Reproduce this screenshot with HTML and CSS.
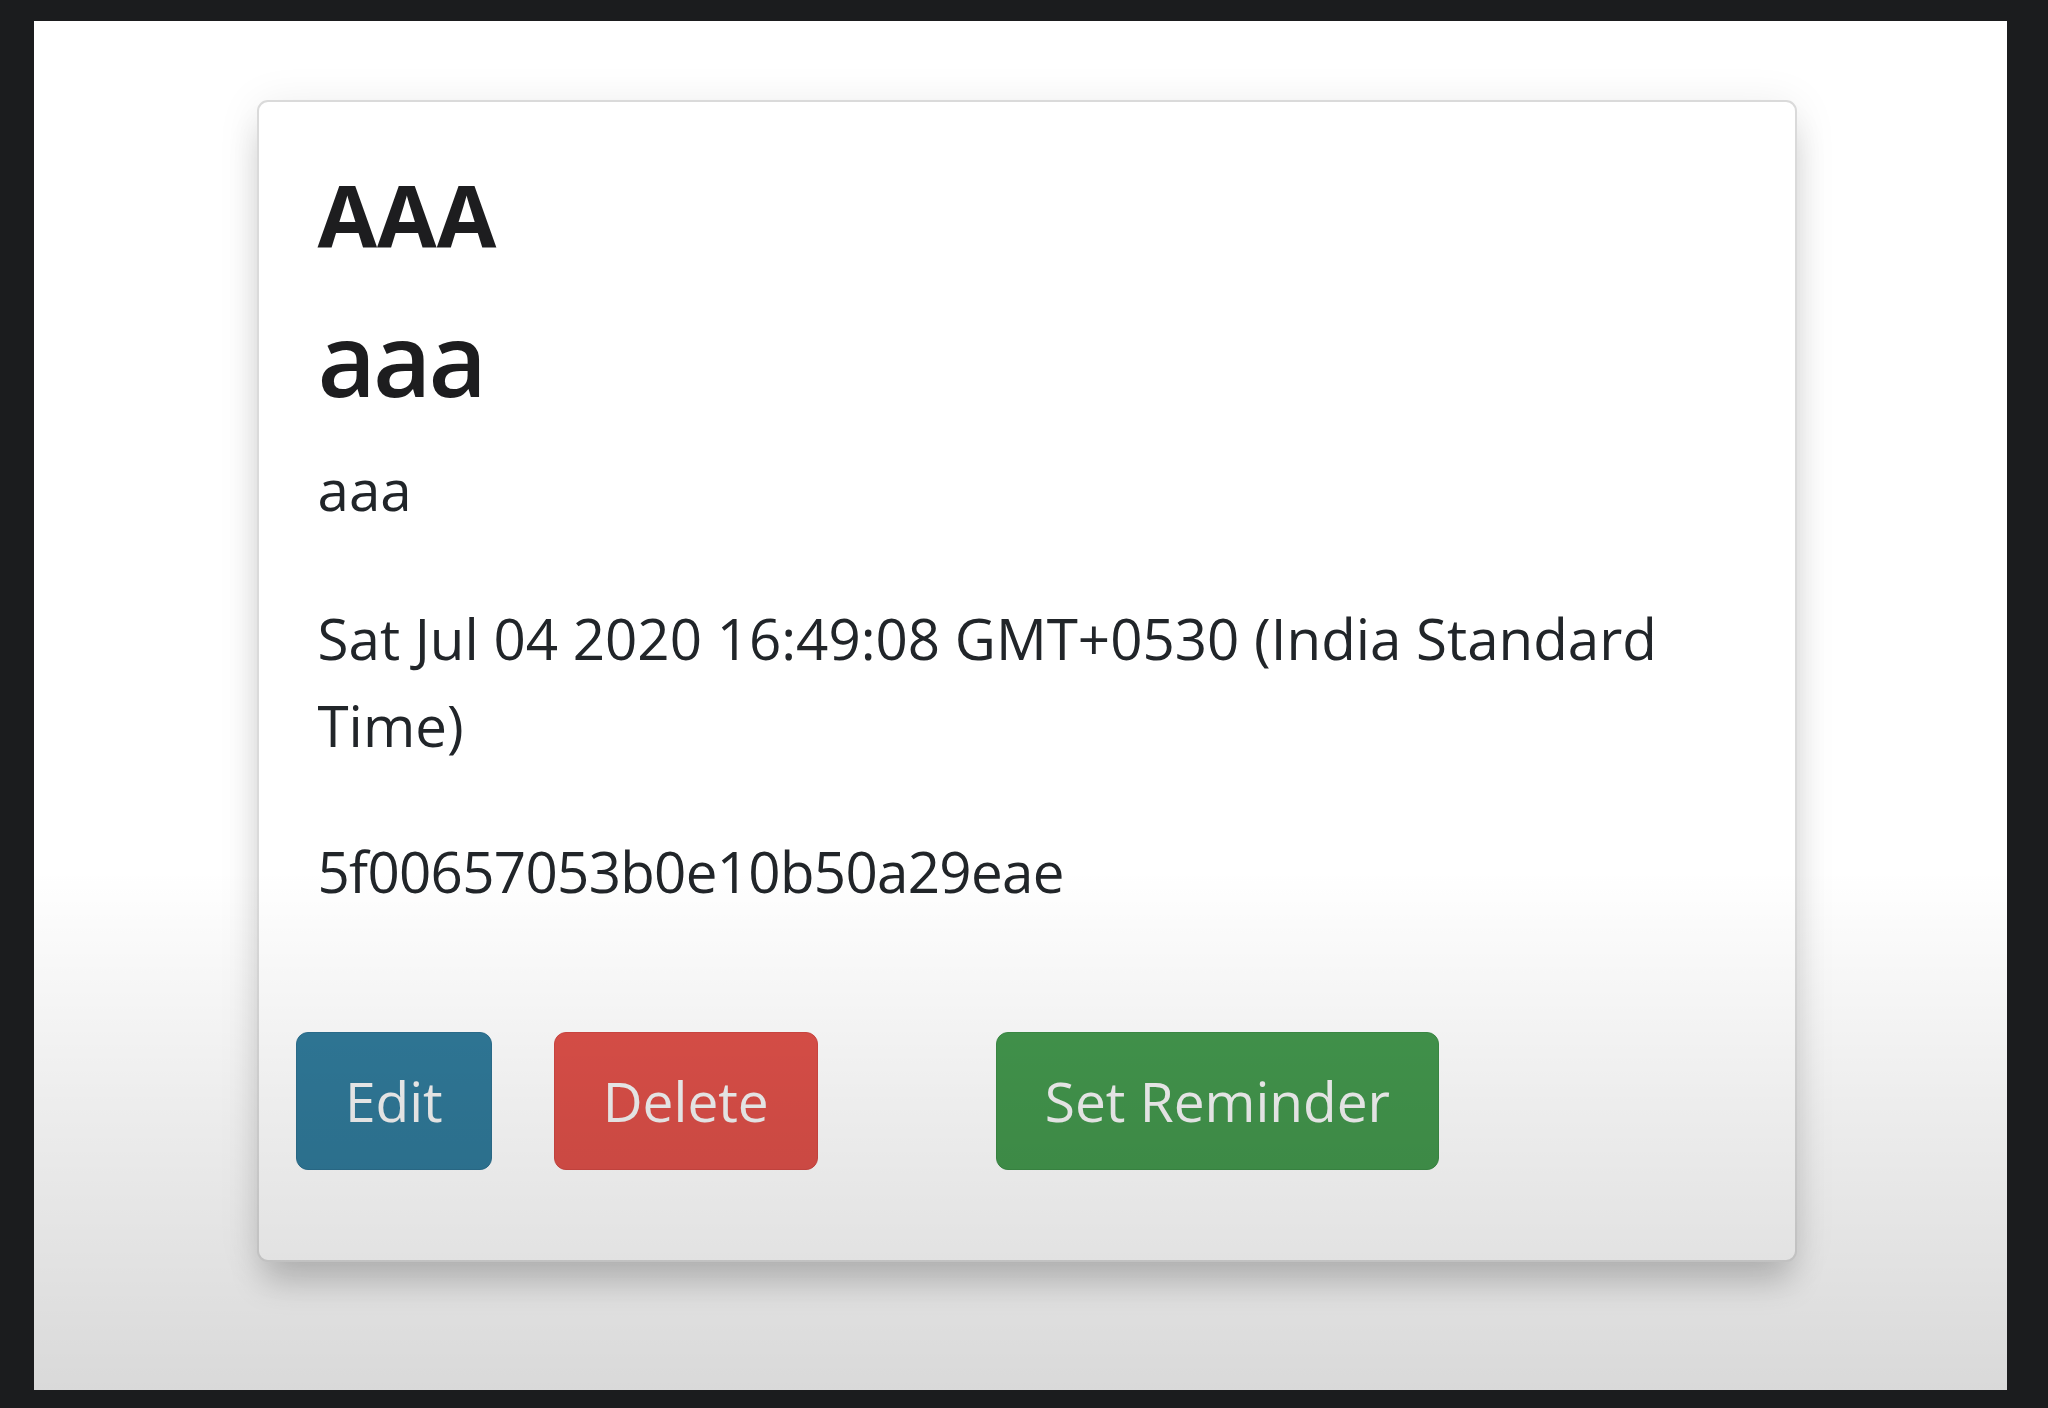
FILE: index.html
```html
<!DOCTYPE html>
<html lang="en">
<head>
<meta charset="utf-8">
<title>Note card</title>
<link rel="stylesheet" href="styles.css">
</head>
<body>
<div class="frame">
  <div class="card">
    <div class="card-body">
      <h4 class="card-title">AAA</h4>
      <h3 class="card-subtitle">aaa</h3>
      <p class="text small-gap">aaa</p>
      <p class="text date">Sat Jul 04 2020 16:49:08 GMT+0530 (India Standard Time)</p>
      <p class="text hash">5f00657053b0e10b50a29eae</p>
    </div>
    <div class="card-actions">
      <button class="btn btn-edit">Edit</button>
      <button class="btn btn-delete">Delete</button>
      <button class="btn btn-remind">Set Reminder</button>
    </div>
  </div>
</div>
</body>
</html>
```

FILE: styles.css
```css
html, body {
  margin: 0;
  padding: 0;
}
body {
  background: #1b1c1e;
  width: 2048px;
  height: 1408px;
  overflow: hidden;
  font-family: "Open Sans", "Noto Sans", sans-serif;
  color: #212529;
}
.frame {
  position: relative;
  margin: 21px 41px 18px 34px;
  height: 1369px;
  background: #ffffff;
  padding-top: 79px;
  box-sizing: border-box;
  overflow: hidden;
}
.frame::after {
  content: "";
  position: absolute;
  inset: 0;
  pointer-events: none;
  background: linear-gradient(to bottom, rgba(0,0,0,0) 0%, rgba(0,0,0,0) 62%, rgba(0,0,0,0.075) 80%, rgba(0,0,0,0.15) 100%);
}
.card {
  margin-left: 223px;
  width: 1540px;
  box-sizing: border-box;
  background: #fff;
  border: 2px solid #dadada;
  border-radius: 11px;
  box-shadow: 0 26px 34px -6px rgba(0,0,0,0.19), 0 4px 44px rgba(0,0,0,0.08);
}
.card-body {
  padding: 60.6px 62px 0 58.5px;
}
.card-title {
  margin: 0 0 32px 0;
  font-size: 86.4px;
  line-height: 103.7px;
  font-weight: 700;
  color: #1d1d1f;
}
.card-subtitle {
  margin: 0 0 28.2px 0;
  font-size: 100.8px;
  line-height: 121px;
  font-weight: 550;
  letter-spacing: -3px;
  color: #1d1d1f;
}
.text {
  margin: 0;
  font-size: 56.5px;
  line-height: 86.4px;
  font-weight: 400;
}
.small-gap {
  margin-bottom: 62.6px;
}
.date {
  margin-bottom: 60.2px;
  padding-right: 20px;
}
.hash {
  margin-bottom: 116px;
  letter-spacing: -0.7px;
}
.card-actions {
  display: flex;
  padding: 0 37px 90px 37px;
}
.btn {
  font-family: "Open Sans", "Noto Sans", sans-serif;
  font-size: 55px;
  line-height: 86px;
  font-weight: 400;
  color: #f4f4f4;
  padding: 25px 48px;
  border: 1px solid transparent;
  border-radius: 12px;
  cursor: pointer;
}
.btn-edit {
  background: #307a9a;
  border-color: #2c7090;
  margin-right: 62px;
}
.btn-delete {
  background: #de5049;
  border-color: #d24843;
  margin-right: 178px;
}
.btn-remind {
  background: #43974d;
  border-color: #3c8d46;
}
```
